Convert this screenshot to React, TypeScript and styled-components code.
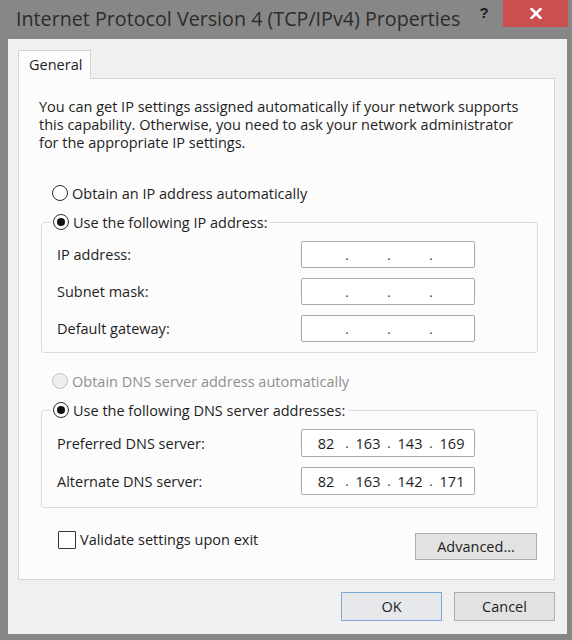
import React from "react";
import styled, { createGlobalStyle } from "styled-components";

const GlobalStyle = createGlobalStyle`
  html, body { margin: 0; padding: 0; background: #878787; }
  body { font-family: "Open Sans", "Noto Sans", sans-serif; color: #1e1e1e; }
  * { box-sizing: border-box; }
`;

const Window = styled.div`
  width: 572px;
  height: 640px;
  background: #878787;
  display: flex;
  flex-direction: column;
`;

const TitleBar = styled.div`
  height: 39px;
  display: flex;
  align-items: flex-start;
  padding-left: 16px;
`;

const Title = styled.div`
  flex: 1;
  font-family: "Open Sans", sans-serif;
  font-size: 19.7px;
  line-height: 38px;
  color: #2c2c2c;
  white-space: nowrap;
`;

const HelpButton = styled.div`
  width: 32px;
  height: 27px;
  font-family: "Liberation Sans", sans-serif;
  font-weight: 700;
  font-size: 15px;
  line-height: 26px;
  text-align: center;
  color: #1a1a1a;
  margin-right: 3px;
`;

const CloseButton = styled.div`
  width: 65px;
  height: 27px;
  margin-right: 4px;
  background: #c9504f;
  display: flex;
  align-items: center;
  justify-content: center;
`;

const Client = styled.div`
  margin: 0 5px 6px 8px;
  flex: 1;
  background: #f0f0f0;
  padding: 11px 12px 0 10px;
  display: flex;
  flex-direction: column;
`;

const TabStrip = styled.div`
  display: flex;
  position: relative;
  z-index: 1;
`;

const Tab = styled.div`
  width: 73px;
  height: 29px;
  border: 1px solid #d4d4d4;
  border-bottom: none;
  background: #fcfcfc;
  font-size: 14.5px;
  line-height: 27px;
  padding-left: 10px;
  margin-bottom: -1px;
`;

const TabPage = styled.div`
  height: 502px;
  border: 1px solid #d4d4d4;
  background: #fcfcfc;
  padding: 19px 16px 0 20px;
  display: flex;
  flex-direction: column;
`;

const Description = styled.p`
  margin: 0;
  font-size: 14.5px;
  line-height: 18px;
  color: #1e1e1e;
  white-space: nowrap;
`;

const OptionRow = styled.label<{ $disabled?: boolean }>`
  display: flex;
  align-items: center;
  gap: 4px;
  height: 20px;
  padding-left: 13px;
  font-size: 14.5px;
  color: ${(p) => (p.$disabled ? "#8f8f8f" : "#1e1e1e")};
  margin-top: ${(p) => (p.$disabled ? "18px" : "31px")};
`;

const Radio = styled.span<{ $checked?: boolean; $disabled?: boolean }>`
  width: 16px;
  height: 16px;
  border-radius: 50%;
  border: 1px solid ${(p) => (p.$disabled ? "#c2c2c2" : "#2b2b2b")};
  background: ${(p) => (p.$disabled ? "#efefef" : "#ffffff")};
  display: flex;
  align-items: center;
  justify-content: center;
  flex-shrink: 0;
  &::after {
    content: "";
    width: 8px;
    height: 8px;
    border-radius: 50%;
    background: #111;
    display: ${(p) => (p.$checked ? "block" : "none")};
  }
`;

const GroupBox = styled.fieldset<{ $padBottom: number }>`
  margin: 9px 0 0 2px;
  border: 1px solid #dcdcdc;
  border-radius: 3px;
  padding: 9px 62px ${(p) => p.$padBottom}px 15px;
  min-width: 0;
`;

const Legend = styled.legend`
  padding: 0 3px 0 2px;
  margin-left: -6px;
  display: flex;
  align-items: center;
  gap: 4px;
  height: 20px;
  font-size: 14.5px;
  color: #1e1e1e;
`;

const FieldGrid = styled.div<{ $rowH: number }>`
  display: grid;
  grid-template-columns: 1fr 174px;
  grid-auto-rows: ${(p) => p.$rowH}px;
  row-gap: 10px;
  align-items: stretch;
`;

const FieldLabel = styled.span`
  font-size: 14.5px;
  color: #1e1e1e;
  display: flex;
  align-items: center;
`;

const IpBox = styled.div`
  border: 1px solid #a9a9a9;
  border-radius: 2px;
  background: #ffffff;
  display: grid;
  grid-template-columns: 38px 4px 38px 4px 38px 4px 38px;
  padding-left: 5px;
  align-items: center;
  font-size: 14.5px;
  color: #1e1e1e;
`;

const Octet = styled.span`
  text-align: center;
`;

const Dot = styled.span`
  text-align: center;
  font-size: 13px;
  color: #333;
`;

const Footer = styled.div`
  display: flex;
  justify-content: space-between;
  align-items: flex-start;
  padding: 22px 1px 0 19px;
`;

const CheckRow = styled.label`
  display: flex;
  align-items: center;
  gap: 4px;
  font-size: 14.5px;
  color: #1e1e1e;
`;

const CheckBox = styled.span`
  width: 18px;
  height: 18px;
  border: 1px solid #333;
  background: #fff;
  border-radius: 1px;
`;

const Button = styled.button<{ $w: number; $h: number; $default?: boolean }>`
  width: ${(p) => p.$w}px;
  height: ${(p) => p.$h}px;
  border: 1px solid ${(p) => (p.$default ? "#7ea6d6" : "#adadad")};
  background: ${(p) => (p.$default ? "#e6e8ec" : "#e2e2e2")};
  font-family: "Open Sans", sans-serif;
  font-size: 14.5px;
  color: #1e1e1e;
  padding: 0;
`;

const AdvancedButton = styled(Button)`
  margin-top: 3px;
`;

const ButtonRow = styled.div`
  display: flex;
  justify-content: flex-end;
  gap: 12px;
  margin-top: 12px;
`;

const ipRows = [
  { label: "IP address:", value: ["", "", "", ""] },
  { label: "Subnet mask:", value: ["", "", "", ""] },
  { label: "Default gateway:", value: ["", "", "", ""] },
];

const dnsRows = [
  { label: "Preferred DNS server:", value: ["82", "163", "143", "169"] },
  { label: "Alternate DNS server:", value: ["82", "163", "142", "171"] },
];

function IpField({ value }: { value: string[] }) {
  return (
    <IpBox>
      <Octet>{value[0]}</Octet>
      <Dot>.</Dot>
      <Octet>{value[1]}</Octet>
      <Dot>.</Dot>
      <Octet>{value[2]}</Octet>
      <Dot>.</Dot>
      <Octet>{value[3]}</Octet>
    </IpBox>
  );
}

export default function App() {
  return (
    <>
      <GlobalStyle />
      <Window>
        <TitleBar>
          <Title>Internet Protocol Version 4 (TCP/IPv4) Properties</Title>
          <HelpButton>?</HelpButton>
          <CloseButton>
            <svg width="12" height="11" viewBox="0 0 12 11">
              <path d="M1.5 1 L10.5 10 M10.5 1 L1.5 10" stroke="#fff" strokeWidth="2.6" strokeLinecap="square" />
            </svg>
          </CloseButton>
        </TitleBar>
        <Client>
          <TabStrip>
            <Tab>General</Tab>
          </TabStrip>
          <TabPage>
            <Description>
              You can get IP settings assigned automatically if your network supports
              <br />
              this capability. Otherwise, you need to ask your network administrator
              <br />
              for the appropriate IP settings.
            </Description>
            <OptionRow>
              <Radio />
              Obtain an IP address automatically
            </OptionRow>
            <GroupBox $padBottom={10}>
              <Legend>
                <Radio $checked />
                Use the following IP address:
              </Legend>
              <FieldGrid $rowH={27}>
                {ipRows.map((r) => (
                  <React.Fragment key={r.label}>
                    <FieldLabel>{r.label}</FieldLabel>
                    <IpField value={r.value} />
                  </React.Fragment>
                ))}
              </FieldGrid>
            </GroupBox>
            <OptionRow $disabled>
              <Radio $disabled />
              Obtain DNS server address automatically
            </OptionRow>
            <GroupBox $padBottom={12}>
              <Legend>
                <Radio $checked />
                Use the following DNS server addresses:
              </Legend>
              <FieldGrid $rowH={28}>
                {dnsRows.map((r) => (
                  <React.Fragment key={r.label}>
                    <FieldLabel>{r.label}</FieldLabel>
                    <IpField value={r.value} />
                  </React.Fragment>
                ))}
              </FieldGrid>
            </GroupBox>
            <Footer>
              <CheckRow>
                <CheckBox />
                Validate settings upon exit
              </CheckRow>
              <AdvancedButton $w={122} $h={27}>Advanced...</AdvancedButton>
            </Footer>
          </TabPage>
          <ButtonRow>
            <Button $w={101} $h={29} $default>OK</Button>
            <Button $w={101} $h={29}>Cancel</Button>
          </ButtonRow>
        </Client>
      </Window>
    </>
  );
}
